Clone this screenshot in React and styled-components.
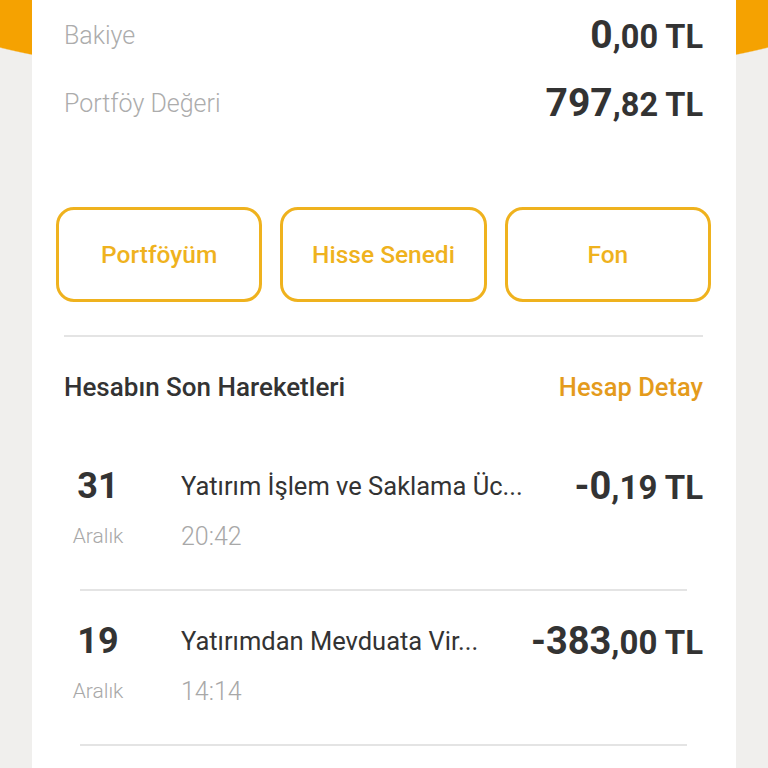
import styled, { createGlobalStyle } from "styled-components";

const GlobalStyle = createGlobalStyle`
  body {
    margin: 0;
    overflow: hidden;
    font-family: Roboto, "Noto Sans", sans-serif;
  }
`;

const Page = styled.div`
  min-height: 768px;
  background:
    radial-gradient(ellipse 472px 83px at 50% 0, #f5a201 99%, transparent 100%),
    #f0efed;
`;

const Card = styled.main`
  margin: 0 32px;
  min-height: 768px;
  background: #ffffff;
  padding: 1px 33px 0 32px;
`;

const SummaryRow = styled.div`
  height: 68px;
  display: flex;
  align-items: center;
  justify-content: space-between;
`;

const SummaryLabel = styled.span`
  font-size: 25px;
  font-weight: 300;
  color: #acacac;
`;

const AmountText = styled.span`
  font-weight: 700;
  color: #333333;
  font-size: ${(props) => (props.$tx ? "33px" : "32.5px")};
  white-space: nowrap;
`;

const AmountMain = styled.span`
  font-size: ${(props) => (props.$tx ? "38px" : "39px")};
`;

const Buttons = styled.div`
  display: grid;
  grid-template-columns: repeat(3, 1fr);
  gap: 18px;
  margin: 70px -8px 0;
`;

const ActionButton = styled.button`
  height: 95px;
  border: 3px solid #efb21e;
  border-radius: 18px;
  background: #ffffff;
  color: #efb21e;
  font-family: Roboto, sans-serif;
  font-size: 24.5px;
  font-weight: 500;
  cursor: pointer;
`;

const Divider = styled.hr`
  border: none;
  height: 2px;
  background: #e4e4e4;
  margin: ${(props) => (props.$inset ? "0 16px" : "33px 0 0")};
`;

const SectionHeader = styled.div`
  height: 99px;
  display: flex;
  align-items: center;
  justify-content: space-between;
`;

const SectionTitle = styled.h2`
  margin: 0;
  font-size: 26px;
  font-weight: 500;
  color: #333333;
`;

const DetailLink = styled.a`
  font-size: 25.5px;
  font-weight: 500;
  color: #e49b1c;
  text-decoration: none;
`;

const TxRow = styled.div`
  display: grid;
  grid-template-columns: 68px 1fr auto;
  grid-template-rows: 50px 50px;
  column-gap: 49px;
  align-items: center;
  padding: 25px 0 28px;
`;

const DayNumber = styled.span`
  text-align: center;
  font-size: 36px;
  font-weight: 700;
  color: #333333;
`;

const MonthName = styled.span`
  text-align: center;
  font-size: 21px;
  font-weight: 300;
  color: #a8a8a8;
`;

const TxTitle = styled.span`
  font-size: 25.5px;
  color: #333333;
  white-space: nowrap;
  overflow: hidden;
`;

const TxTime = styled.span`
  grid-column: 2;
  font-size: 25px;
  font-weight: 300;
  color: #a8a8a8;
`;

const summary = [
  { label: "Bakiye", main: "0", rest: ",00 TL" },
  { label: "Portföy Değeri", main: "797", rest: ",82 TL" },
];

const transactions = [
  {
    day: "31",
    month: "Aralık",
    title: "Yatırım İşlem ve Saklama Üc...",
    time: "20:42",
    main: "-0",
    rest: ",19 TL",
  },
  {
    day: "19",
    month: "Aralık",
    title: "Yatırımdan Mevduata Vir...",
    time: "14:14",
    main: "-383",
    rest: ",00 TL",
  },
];

function Amount({ main, rest, $tx }) {
  return (
    <AmountText $tx={$tx}>
      <AmountMain $tx={$tx}>{main}</AmountMain>
      {rest}
    </AmountText>
  );
}

export default function App() {
  return (
    <>
      <GlobalStyle />
      <Page>
        <Card>
          {summary.map((item) => (
            <SummaryRow key={item.label}>
              <SummaryLabel>{item.label}</SummaryLabel>
              <Amount main={item.main} rest={item.rest} />
            </SummaryRow>
          ))}
          <Buttons>
            <ActionButton>Portföyüm</ActionButton>
            <ActionButton>Hisse Senedi</ActionButton>
            <ActionButton>Fon</ActionButton>
          </Buttons>
          <Divider />
          <SectionHeader>
            <SectionTitle>Hesabın Son Hareketleri</SectionTitle>
            <DetailLink href="#">Hesap Detay</DetailLink>
          </SectionHeader>
          {transactions.map((tx) => (
            <div key={tx.day + tx.time}>
              <TxRow>
                <DayNumber>{tx.day}</DayNumber>
                <TxTitle>{tx.title}</TxTitle>
                <Amount main={tx.main} rest={tx.rest} $tx />
                <MonthName>{tx.month}</MonthName>
                <TxTime>{tx.time}</TxTime>
              </TxRow>
              <Divider $inset />
            </div>
          ))}
        </Card>
      </Page>
    </>
  );
}
